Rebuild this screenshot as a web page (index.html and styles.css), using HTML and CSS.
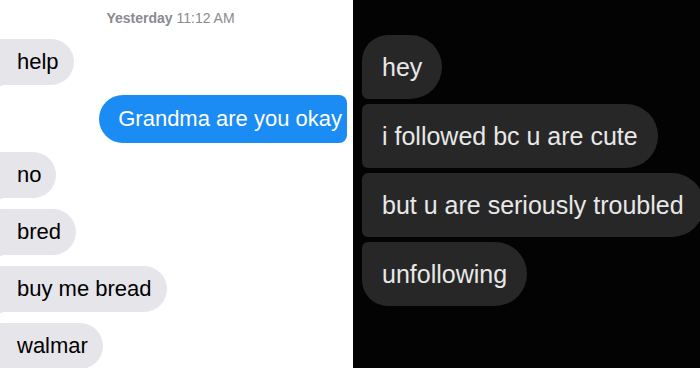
FILE: index.html
```html
<!doctype html>
<html>
    <head>
        <meta charset="utf-8" />
        <title>Texts</title>
        <link rel="stylesheet" href="styles.css">
    </head>
    <body>
        <div id="wrapper">
            <div class="chat light">
                <div class="stamp"><b>Yesterday</b> 11:12 AM</div>
                <div class="bubble in before-out">help</div>
                <div class="bubble out">Grandma are you okay</div>
                <div class="bubble in">no</div>
                <div class="bubble in">bred</div>
                <div class="bubble in">buy me bread</div>
                <div class="bubble in">walmar</div>
            </div>

            <div class="chat dark">
                <div class="msg first">hey</div>
                <div class="msg">i followed bc u are cute</div>
                <div class="msg">but u are seriously troubled</div>
                <div class="msg last">unfollowing</div>
            </div>
        </div>
    </body>
</html>
```

FILE: styles.css
```css
* {
    margin: 0;
    padding: 0;
    box-sizing: border-box;
    font-family: "Liberation Sans", Arial, sans-serif;
}

html, body, #wrapper {
    width: 100%;
    height: 100%;
}

#wrapper {
    display: flex;
    overflow: hidden;
}

.chat {
    display: flex;
    flex-direction: column;
    align-items: flex-start;
    overflow: hidden;
    height: 100%;
}

.light {
    width: 353px;
    background: #fff;
    padding-top: 9px;
}

.dark {
    flex: 1;
    background: #030303;
    padding: 35px 0 0 9px;
    gap: 5px;
}

.stamp {
    align-self: stretch;
    text-align: center;
    padding-right: 12px;
    font-size: 14px;
    line-height: 18px;
    color: #8a8a8f;
    margin-bottom: 12px;
}

.stamp b {
    font-weight: bold;
}

.bubble {
    position: relative;
    height: 46px;
    line-height: 46px;
    font-size: 22px;
    white-space: nowrap;
    border-radius: 23px;
    margin-bottom: 11px;
}

.before-out {
    margin-bottom: 10px;
}

.in {
    background: #e5e5ea;
    color: #000;
    margin-left: -20px;
    padding: 0 15px 0 37px;
}

.in::before {
    content: "";
    position: absolute;
    left: 12px;
    bottom: -2px;
    width: 14px;
    height: 12px;
    background: #e5e5ea;
    border-bottom-right-radius: 10px 8px;
}

.out {
    align-self: flex-end;
    margin-right: 6px;
    margin-bottom: 9px;
    background: #1a8cf4;
    color: #fff;
    height: 48px;
    line-height: 48px;
    padding: 0 5px 0 19px;
    border-radius: 24px 8px 8px 24px;
}

.msg {
    height: 64px;
    line-height: 64px;
    padding: 0 20px;
    font-size: 25px;
    white-space: nowrap;
    color: #e8e8e8;
    background: #272727;
    border-radius: 6px 32px 32px 6px;
}

.msg.first {
    border-top-left-radius: 26px;
}

.msg.last {
    border-bottom-left-radius: 26px;
}
```
